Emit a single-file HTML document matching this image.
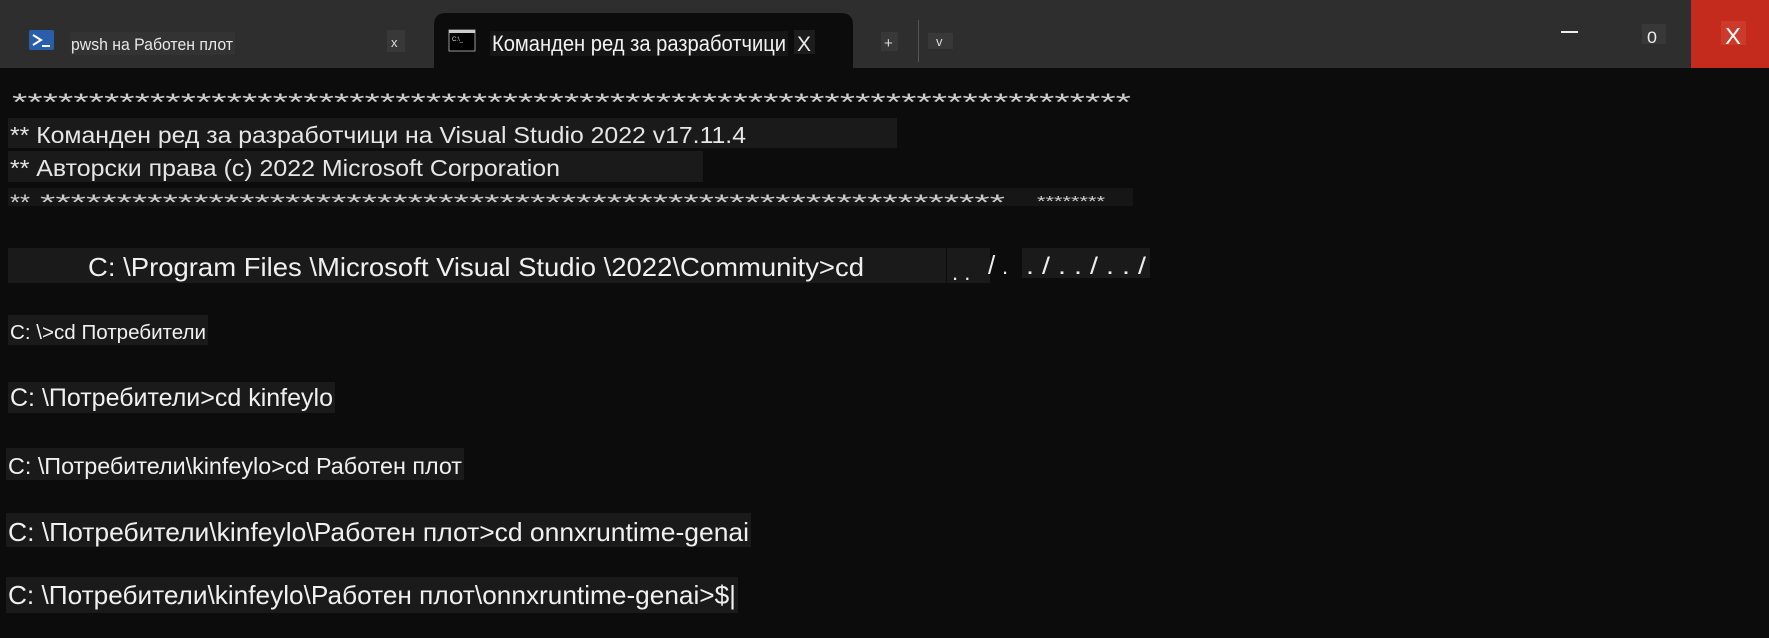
<!DOCTYPE html>
<html><head><meta charset="utf-8"><style>
html,body{margin:0;padding:0;background:#0c0c0c;width:1769px;height:638px;overflow:hidden}
svg{display:block}
text{font-family:"Liberation Sans","DejaVu Sans",sans-serif;fill:#cccccc}
</style></head><body>
<svg width="1769" height="638" viewBox="0 0 1769 638" xmlns="http://www.w3.org/2000/svg">
<rect x="0" y="0" width="1769" height="68" fill="#2e2e2e"/>
<rect x="0" y="68" width="1769" height="570" fill="#0c0c0c"/>
<path d="M434 68 V25 Q434 13 446 13 H841 Q853 13 853 25 V68 Z" fill="#0c0c0c"/>
<rect x="29" y="30" width="25" height="20" rx="2" fill="#2b5ea8"/>
<path d="M33 35 L41 40 L33 45" stroke="#fff" stroke-width="2" fill="none"/>
<rect x="42" y="45" width="8" height="2" fill="#fff"/>
<rect x="70" y="32" width="165" height="23" fill="#333"/>
<text x="71" y="50" font-size="17" textLength="162" lengthAdjust="spacingAndGlyphs" style="fill:#e8e8e8">pwsh на Работен плот</text>
<rect x="387" y="30" width="18" height="22" fill="#383838"/>
<text x="391" y="47" font-size="13" style="fill:#ddd">x</text>
<rect x="449" y="30" width="26" height="21" fill="#000" stroke="#999" stroke-width="1"/>
<rect x="449" y="30" width="26" height="3" fill="#ccc"/>
<text x="452" y="41" font-size="6" style="fill:#ddd">C:\_</text>
<rect x="490" y="31" width="298" height="25" fill="#161616"/>
<text x="492" y="51" font-size="22" textLength="294" lengthAdjust="spacingAndGlyphs" style="fill:#f2f2f2">Командeн ред за разработчици</text>
<rect x="794" y="30" width="21" height="24" fill="#1c1c1c"/>
<text x="797" y="51" font-size="21" textLength="14" lengthAdjust="spacingAndGlyphs" style="fill:#eee">X</text>
<rect x="881" y="32" width="17" height="19" fill="#383838"/>
<text x="884" y="48" font-size="15" style="fill:#ddd">+</text>
<rect x="918" y="20" width="1" height="42" fill="#555"/>
<rect x="928" y="33" width="25" height="16" fill="#383838"/>
<text x="936" y="46" font-size="13" style="fill:#ddd">v</text>
<rect x="1561" y="31" width="17" height="2" fill="#eee"/>
<rect x="1642" y="24" width="24" height="20" fill="#383838"/>
<text x="1647" y="43" font-size="17" textLength="10" lengthAdjust="spacingAndGlyphs" style="fill:#eee">0</text>
<rect x="1691" y="0" width="78" height="68" fill="#c42b1c"/>
<rect x="1721" y="21" width="25" height="24" fill="#cc3a2c"/>
<text x="1725" y="44" font-size="23" textLength="16" lengthAdjust="spacingAndGlyphs" style="fill:#fff">X</text>
<text x="12" y="110" font-size="24" textLength="1119" lengthAdjust="spacingAndGlyphs">*************************************************************************</text>
<rect x="8" y="118" width="889" height="30" fill="#1a1a1a"/>
<text x="10" y="143" font-size="23" textLength="736" lengthAdjust="spacingAndGlyphs" style="fill:#e6e6e6">** Командeн ред за разработчици на Visual Studio 2022 v17.11.4</text>
<rect x="8" y="151" width="695" height="31" fill="#1a1a1a"/>
<text x="10" y="176" font-size="23" textLength="550" lengthAdjust="spacingAndGlyphs" style="fill:#e6e6e6">** Авторски права (c) 2022 Microsoft Corporation</text>
<rect x="8" y="188" width="1125" height="18" fill="#161616"/>
<text x="10" y="210" font-size="22" textLength="20" lengthAdjust="spacingAndGlyphs">**</text>
<text x="40" y="210" font-size="22" textLength="965" lengthAdjust="spacingAndGlyphs">***************************************************************</text>
<text x="1037" y="206" font-size="15" textLength="68" lengthAdjust="spacingAndGlyphs">********</text>
<rect x="8" y="248" width="938" height="35" fill="#1a1a1a"/>
<text x="88" y="276" font-size="26" textLength="776" lengthAdjust="spacingAndGlyphs" style="fill:#f0f0f0">C: \Program Files \Microsoft Visual Studio \2022\Community&gt;cd</text>
<rect x="947" y="248" width="43" height="35" fill="#1a1a1a"/>
<text x="952" y="280" font-size="22" style="fill:#eee">. .</text>
<text x="988" y="274" font-size="26" style="fill:#eee">/</text>
<text x="1002" y="274" font-size="22" style="fill:#eee">.</text>
<rect x="1022" y="248" width="128" height="30" fill="#1a1a1a"/>
<text x="1026" y="274" font-size="24" textLength="120" lengthAdjust="spacingAndGlyphs" style="fill:#eee">. / . . / . . /</text>
<rect x="8" y="315" width="200" height="30" fill="#1a1a1a"/>
<text x="10" y="339" font-size="20" textLength="196" lengthAdjust="spacingAndGlyphs" style="fill:#f0f0f0">C: \&gt;cd Потребители</text>
<rect x="8" y="382" width="327" height="31" fill="#1a1a1a"/>
<text x="10" y="406" font-size="25" textLength="323" lengthAdjust="spacingAndGlyphs" style="fill:#f0f0f0">C: \Потребители&gt;cd kinfeylo</text>
<rect x="6" y="448" width="458" height="32" fill="#1a1a1a"/>
<text x="8" y="474" font-size="23" textLength="454" lengthAdjust="spacingAndGlyphs" style="fill:#f0f0f0">C: \Потребители\kinfeylo&gt;cd Работен плот</text>
<rect x="6" y="513" width="745" height="34" fill="#1a1a1a"/>
<text x="8" y="541" font-size="26" textLength="741" lengthAdjust="spacingAndGlyphs" style="fill:#f0f0f0">C: \Потребители\kinfeylo\Работен плот&gt;cd onnxruntime-genai</text>
<rect x="6" y="577" width="732" height="36" fill="#1a1a1a"/>
<text x="8" y="604" font-size="26" textLength="728" lengthAdjust="spacingAndGlyphs" style="fill:#f0f0f0">C: \Потребители\kinfeylo\Работен плот\onnxruntime-genai&gt;$|</text>
</svg>
</body></html>
